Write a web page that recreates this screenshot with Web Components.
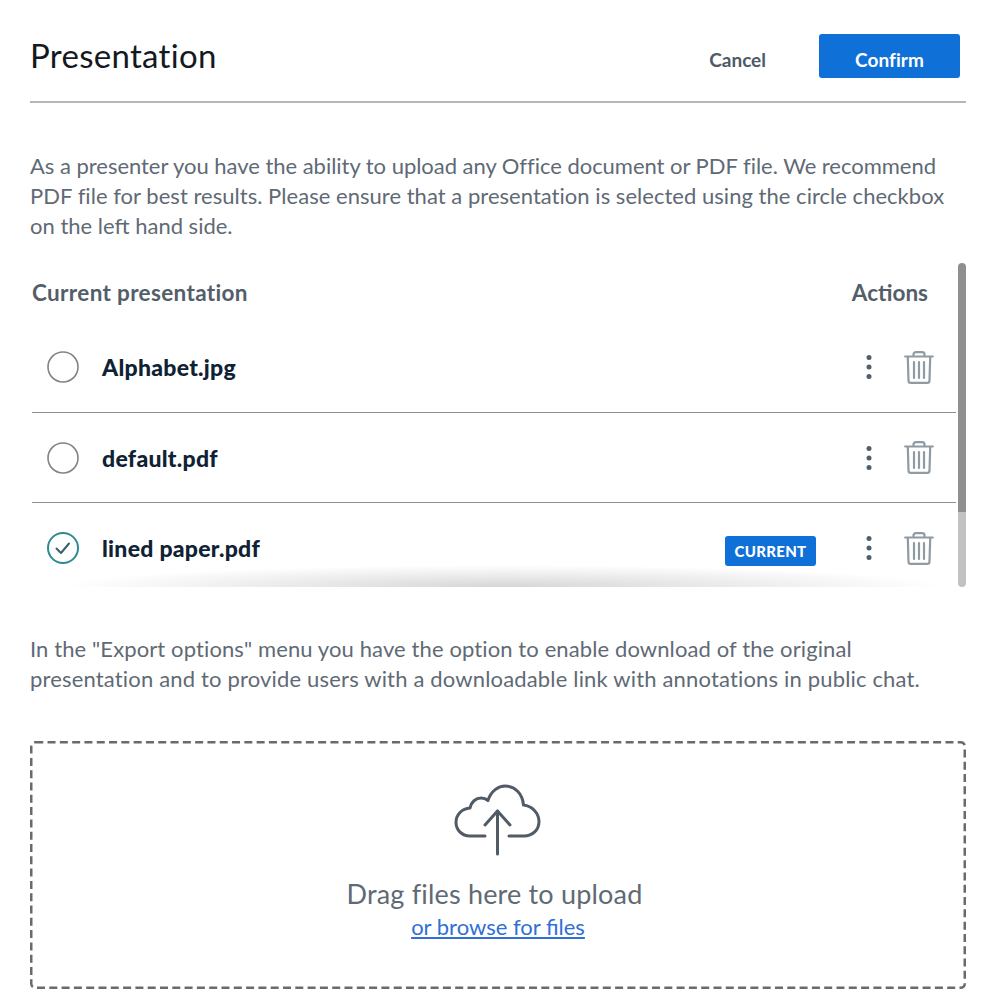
<!DOCTYPE html>
<html lang="en"><head><meta charset="utf-8"><title>Presentation</title>
<style>
html,body{margin:0;padding:0;background:#fff}
body{font-family:"Lato","Noto Sans",sans-serif;width:984px;height:1008px;overflow:hidden}
</style></head><body>
<presentation-dialog></presentation-dialog>
<template id="t-dialog"><style>
:host{display:block;box-sizing:border-box;width:984px;height:1008px;padding:34px 18px 0 30px}
p{margin:0;font-size:22px;line-height:30px;color:#5f6a75}
.intro{margin-top:48px;height:90px}
.exp{margin-top:47px;height:60px}
p span{display:block;white-space:nowrap}
.intro span:nth-child(1){letter-spacing:-.03px}
.intro span:nth-child(2){letter-spacing:.03px}
.exp span:nth-child(1){letter-spacing:.11px}
.exp span:nth-child(2){letter-spacing:.17px}
</style>
<dialog-header></dialog-header>
<p class="intro"><span>As a presenter you have the ability to upload any Office document or PDF file. We recommend</span><span>PDF file for best results. Please ensure that a presentation is selected using the circle checkbox</span><span>on the left hand side.</span></p>
<file-list></file-list>
<p class="exp"><span>In the "Export options" menu you have the option to enable download of the original</span><span>presentation and to provide users with a downloadable link with annotations in public chat.</span></p>
<drop-zone></drop-zone>
</template>
<template id="t-header"><style>
:host{display:flex;align-items:flex-start;height:67px;border-bottom:2px solid #b4b8bc;padding-right:6px}
.t{flex:1;font-size:33px;line-height:42px;color:#14191f;letter-spacing:.3px}
.row{display:flex;align-items:center;height:44px}
.c{font-size:19px;font-weight:700;color:#4e5a66;margin-right:53px;padding-top:6px}
.b{width:141px;height:44px;border-radius:3px;background:#0f70d7;color:#fff;font-size:19px;font-weight:700;letter-spacing:.1px;display:flex;align-items:center;justify-content:center;padding-top:7px;box-sizing:border-box}
</style><div class="t">Presentation</div><div class="row"><div class="c">Cancel</div><div class="b">Confirm</div></div></template>
<template id="t-list"><style>
:host{display:flex;margin-top:22px;height:324px;gap:2px;position:relative}
.main{flex:1;margin-left:2px;display:flex;flex-direction:column;position:relative;overflow:hidden}
.head{display:flex;flex:none;justify-content:space-between;align-items:center;height:59px;font-size:22.5px;font-weight:700;color:#535e69;padding-right:28px}
.head span:first-child{letter-spacing:.35px}
.shadow{position:absolute;left:30px;right:10px;bottom:0;height:22px;background:radial-gradient(ellipse 50% 100% at 50% 100%,rgba(0,0,0,.16),rgba(0,0,0,0));pointer-events:none}
.bar{width:8px;border-radius:4px;background:linear-gradient(#8f8f8f 0,#8f8f8f 249px,#c2c2c2 249px);}
file-row:first-of-type{height:91px}
</style><div class="main"><div class="head"><span>Current presentation</span><span>Actions</span></div>
<file-row name="Alphabet.jpg"></file-row><file-row name="default.pdf"></file-row><file-row name="lined paper.pdf" current last></file-row>
<div class="shadow"></div></div><div class="bar"></div></template>
<template id="t-row"><style>
:host{display:flex;flex:none;align-items:center;height:90px;box-sizing:border-box;border-bottom:1px solid #8a9299;padding:0 22px 0 15px}
:host([last]){border-bottom:none}
svg{display:block;flex:none}
.n{flex:1;margin-left:23px;font-size:23px;font-weight:900;color:#0f2235;letter-spacing:.27px}
.badge{display:none;width:91px;height:30px;border-radius:3px;background:#0f70d7;color:#fff;font-size:15px;font-weight:900;align-items:center;justify-content:center;margin:5px 43px 0 0;letter-spacing:.3px}
:host([current]) .badge{display:flex}
.dots{margin-right:25px}
</style>
<svg class="radio" width="32" height="32" viewBox="0 0 32 32" fill="none"><circle cx="16" cy="16" r="15" stroke="#7f8489" stroke-width="1.6"/></svg>
<div class="n"></div><div class="badge">CURRENT</div>
<svg class="dots" width="20" height="28" viewBox="0 0 20 28"><g fill="#4e5f6e"><circle cx="10" cy="4.500" r="2.500"/><circle cx="10" cy="14" r="2.500"/><circle cx="10" cy="23.500" r="2.500"/></g></svg>
<svg width="30" height="33" viewBox="0 0 30 33" fill="none" stroke="#8f9aa3" stroke-width="2.200" stroke-linecap="round" stroke-linejoin="round"><path d="M1.200 5.500h27.600"/><path d="M9.500 5V3.500C9.500 2 10.500 1.200 12 1.200h6c1.500 0 2.500.8 2.500 2.300V5"/><path d="M3.800 6l.7 23.500c0 1.500 1 2.400 2.300 2.400h16.400c1.300 0 2.300-.9 2.300-2.400L26.200 6"/><path d="M10 11v16M15 11v16M20 11v16"/></svg>
</template>
<template id="t-drop"><style>
:host{display:flex;flex-direction:column;align-items:center;box-sizing:border-box;position:relative;margin-top:47px;height:248px;width:936px;padding-top:43px;color:#5f6a75}
.frame{position:absolute;left:0;top:0}
svg{display:block}
.d{font-size:27px;line-height:36px;margin-top:18px;letter-spacing:.18px;padding-right:7px}
a{font-size:22px;line-height:30px;color:#2f6fd6;text-decoration:underline}
</style>
<svg class="frame" width="936" height="248" viewBox="0 0 936 248" fill="none"><rect x="1.250" y="1.250" width="933.500" height="245.500" rx="4" stroke="#666b70" stroke-width="2.500" stroke-dasharray="8 4.300"/></svg>
<svg width="88" height="74" viewBox="0 0 88 74" fill="none" stroke="#505b65" stroke-width="3" stroke-linecap="round" stroke-linejoin="round"><path d="M31 52H16C7.500 52 2 45.500 2 38.500c0-8 6-14 14-14.500 1-6 6-10 11-10 2.500 0 5 .8 7 2.500C37 7 44.500 2 51 2c10 0 17.500 7.500 18.500 19C78 22 85 29 85 37.500 85 46 78.500 52 70 52H55"/><path d="M43.500 70V27"/><path d="M31 41l12.500-14L56 41"/></svg>
<div class="d">Drag files here to upload</div><a href="#">or browse for files</a></template>
<script>
function def(name,tpl,init){customElements.define(name,class extends HTMLElement{connectedCallback(){if(this.shadowRoot)return;const r=this.attachShadow({mode:'open'});r.appendChild(document.getElementById(tpl).content.cloneNode(true));if(init)init(this,r);}});}
def('dialog-header','t-header');
def('file-list','t-list');
def('drop-zone','t-drop');
def('file-row','t-row',(h,r)=>{r.querySelector('.n').textContent=h.getAttribute('name');
 if(h.hasAttribute('current')){const c=r.querySelector('.radio');c.innerHTML='<circle cx="16" cy="16" r="15" stroke="#2f8a92" stroke-width="2"/><path d="M9.500 16.500l4.500 4.500 8-9.500" stroke="#3a5f6c" stroke-width="2" stroke-linecap="round" stroke-linejoin="round"/>';}});
def('presentation-dialog','t-dialog');
</script>
</body></html>
